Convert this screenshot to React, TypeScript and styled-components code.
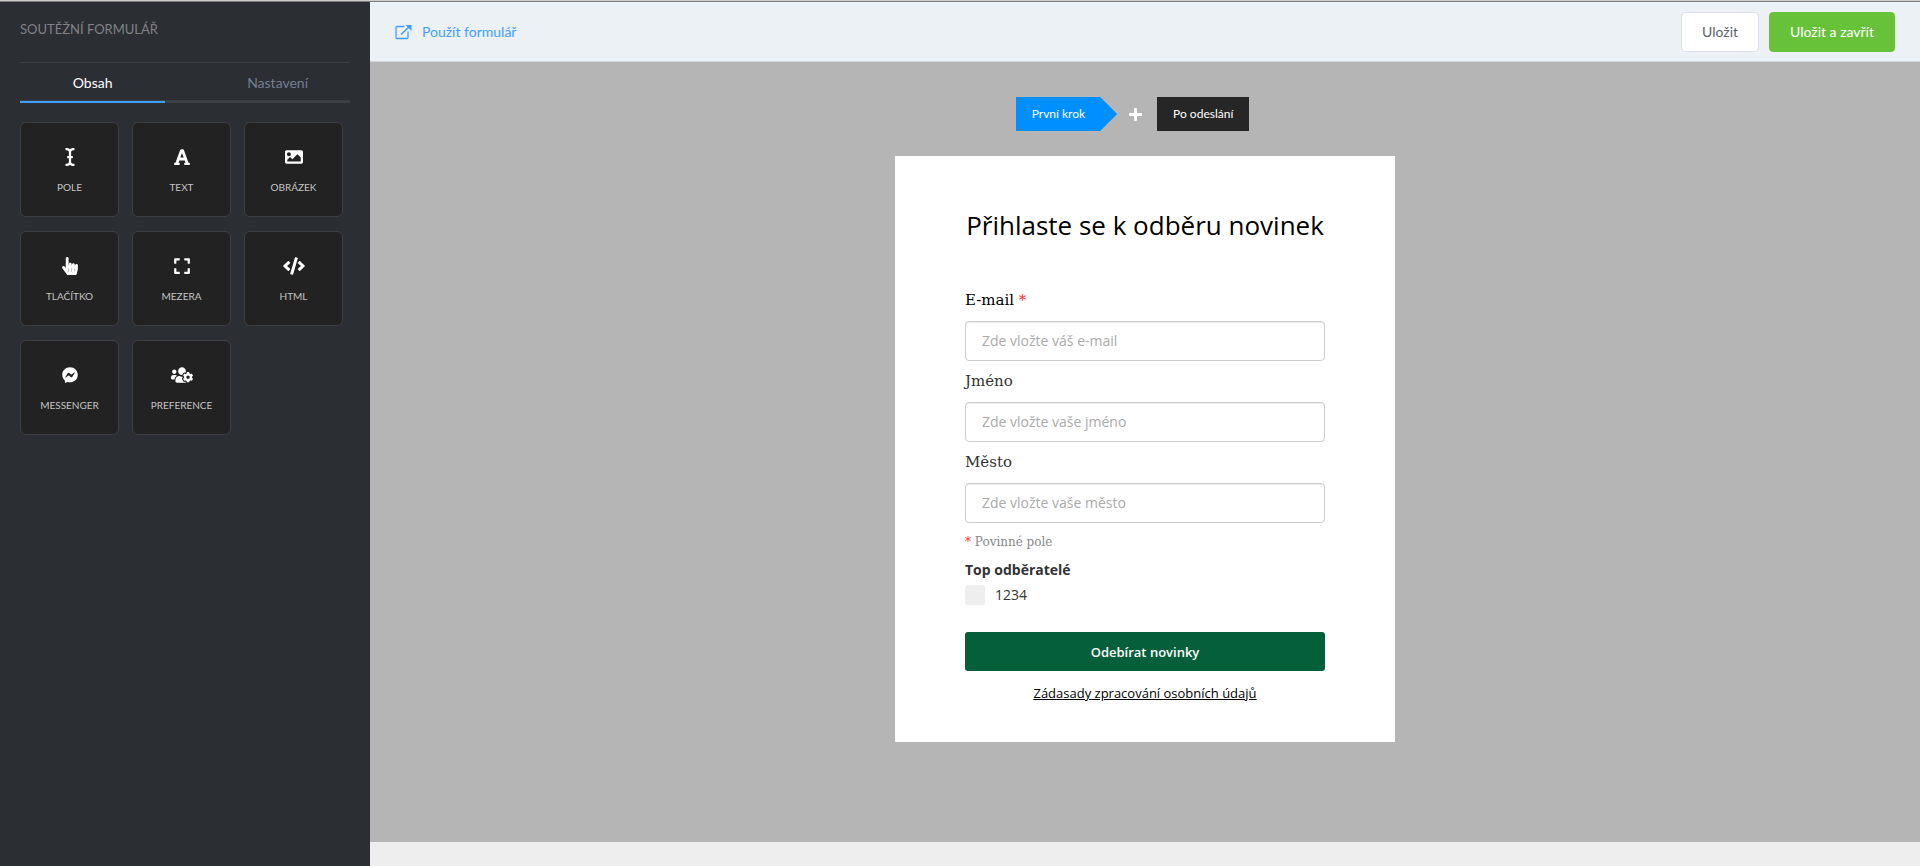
import React from "react";
import styled, { createGlobalStyle } from "styled-components";
import {
  FaICursor, FaFont, FaImage, FaHandPointer, FaExpand, FaCode, FaFacebookMessenger, FaUsersCog, FaPlus,
} from "react-icons/fa";

const ui = `Lato, "Open Sans", sans-serif`;
const body = `"Open Sans", "Noto Sans", sans-serif`;
const slab = `"DejaVu Serif", serif`;

const GlobalStyle = createGlobalStyle`
  *, *::before, *::after { box-sizing: border-box; }
  body { margin: 0; font-family: ${ui}; font-size: 14px; line-height: 20px; background: #eeeeee; }
  h1, h2, p, fieldset { margin: 0; padding: 0; border: 0; }
  button, input { font: inherit; }
  button { cursor: pointer; }
`;

const Page = styled.div`
  display: flex;
  min-height: 100vh;
  border-top: 1px solid #cccccc;
`;

const Sidebar = styled.aside`
  width: 370px;
  flex: none;
  padding: 12px 20px 20px;
  background: #2b2e33;
  border-top: 1px solid #808080;
`;

const SidebarTitle = styled.h1`
  height: 49px;
  padding-top: 5px;
  border-bottom: 1px solid #3c3f44;
  font-size: 13px;
  font-weight: 400;
  line-height: 20px;
  color: #808285;
  text-transform: uppercase;
`;

const Tabs = styled.div`
  display: flex;
  height: 40px;
  box-shadow: inset 0 -3px #3c3f44;
`;

const Tab = styled.button<{ $active?: boolean }>`
  flex: ${(p) => (p.$active ? "0 0 44%" : "1")};
  padding: ${(p) => (p.$active ? "2px 0 0" : "2px 0 0 40px")};
  border: 0;
  border-bottom: 2px solid ${(p) => (p.$active ? "#409eff" : "transparent")};
  background: none;
  color: ${(p) => (p.$active ? "#ffffff" : "#747f92")};
`;

const Tiles = styled.div`
  display: flex;
  flex-wrap: wrap;
  gap: 14px 13px;
  margin-top: 19px;
`;

const Tile = styled.button`
  display: flex;
  flex-direction: column;
  align-items: center;
  gap: 15px;
  width: 99px;
  height: 95px;
  padding: 25px 0 0;
  border: 1px solid #3c3f44;
  border-radius: 6px;
  background: #222222;
  color: #ffffff;
`;

const TileIcon = styled.span<{ $size: number }>`
  display: flex;
  align-items: center;
  height: 18px;
  svg {
    width: 22px;
    height: ${(p) => p.$size}px;
  }
`;

const TileLabel = styled.span`
  font-size: 10px;
  line-height: 12px;
  color: #c4c4c4;
  text-transform: uppercase;
`;

const Main = styled.main`
  flex: 1;
  display: flex;
  flex-direction: column;
  padding-bottom: 24px;
  border-top: 1px solid #808080;
`;

const Toolbar = styled.header`
  display: flex;
  align-items: center;
  gap: 10px;
  height: 60px;
  padding: 0 25px;
  background: #ecf1f6;
  border-bottom: 1px solid #d3d5d7;
`;

const UseLink = styled.a`
  display: flex;
  align-items: center;
  gap: 10px;
  margin-right: auto;
  color: #409eff;
  text-decoration: none;
`;

const ToolbarButton = styled.button<{ $primary?: boolean }>`
  height: 40px;
  padding: 0 20px;
  border: 1px solid ${(p) => (p.$primary ? "#67c23a" : "#dcdfe6")};
  border-radius: 4px;
  background: ${(p) => (p.$primary ? "#67c23a" : "#ffffff")};
  color: ${(p) => (p.$primary ? "#ffffff" : "#606266")};
`;

const Canvas = styled.section`
  flex: 1;
  display: flex;
  flex-direction: column;
  align-items: center;
  padding: 35px 20px 99px;
  background: #b5b5b5;
`;

const Steps = styled.nav`
  display: flex;
  align-items: center;
  padding-right: 25px;
  margin-bottom: 25px;
`;

const Step = styled.button<{ $active?: boolean }>`
  height: 34px;
  padding: ${(p) => (p.$active ? "0 32px 0 16px" : "0 16px")};
  border: 0;
  background: ${(p) => (p.$active ? "#008fff" : "#262626")};
  clip-path: ${(p) => (p.$active ? "polygon(0 0, calc(100% - 17px) 0, 100% 50%, calc(100% - 17px) 100%, 0 100%)" : "none")};
  color: #ffffff;
  font-size: 12px;
`;

const AddStep = styled.button`
  display: flex;
  padding: 0 14px 0 11px;
  border: 0;
  background: none;
  color: #ffffff;
  font-size: 15px;
`;

const Card = styled.form`
  width: 100%;
  max-width: 500px;
  padding: 49px 70px 39px;
  background: #ffffff;
  color: #333333;
  font-family: ${body};
`;

const FormTitle = styled.h2`
  margin-bottom: 45px;
  font-size: 26px;
  font-weight: 400;
  line-height: 40px;
  color: #000000;
  text-align: center;
`;

const Field = styled.div`
  display: flex;
  flex-direction: column;
  gap: 11px;
  margin-bottom: 10px;
`;

const Label = styled.label<{ $strong?: boolean }>`
  font-family: ${slab};
  font-size: 15px;
  line-height: 20px;
  color: ${(p) => (p.$strong ? "#000000" : "#333333")};
`;

const Required = styled.span`
  color: #ff2a2a;
`;

const TextInput = styled.input`
  width: 100%;
  height: 40px;
  padding: 0 16px 1px;
  border: 1px solid #cccccc;
  border-radius: 4px;
  background: #ffffff;
  box-shadow: inset 0 1px 1px rgba(0, 0, 0, 0.075);
  font-size: 14px;
  color: #333333;
  &::placeholder { color: #aaaaaa; opacity: 1; }
`;

const Note = styled.p`
  font-family: ${slab};
  font-size: 12px;
  line-height: 18px;
  color: #888888;
`;

const Legend = styled.legend`
  padding: 0;
  font-weight: 700;
  line-height: 20px;
`;

const Group = styled.fieldset`
  margin: 9px 0 27px;
`;

const Choice = styled.label`
  display: flex;
  align-items: center;
  gap: 10px;
  margin-top: 5px;
`;

const Checkbox = styled.input`
  appearance: none;
  width: 20px;
  height: 20px;
  margin: 0;
  border-radius: 3px;
  background: #eeeeee;
`;

const Submit = styled.button`
  display: block;
  width: 100%;
  height: 39px;
  border: 0;
  border-radius: 3px;
  background: #055f3a;
  color: #ffffff;
  font-size: 13px;
  font-weight: 600;
`;

const Terms = styled.p`
  margin-top: 12px;
  font-size: 13px;
  line-height: 20px;
  text-align: center;
  a { color: #000000; }
`;

const tiles = [
  { label: "Pole", Icon: FaICursor, size: 18 },
  { label: "Text", Icon: FaFont, size: 18 },
  { label: "Obrázek", Icon: FaImage, size: 18 },
  { label: "Tlačítko", Icon: FaHandPointer, size: 18 },
  { label: "Mezera", Icon: FaExpand, size: 18 },
  { label: "HTML", Icon: FaCode, size: 18 },
  { label: "Messenger", Icon: FaFacebookMessenger, size: 16 },
  { label: "Preference", Icon: FaUsersCog, size: 18 },
];

const fields = [
  { id: "email", label: "E-mail", placeholder: "Zde vložte váš e-mail", required: true },
  { id: "name", label: "Jméno", placeholder: "Zde vložte vaše jméno" },
  { id: "city", label: "Město", placeholder: "Zde vložte vaše město" },
];

function OpenIcon() {
  return (
    <svg width="17" height="16" viewBox="0 0 17 16" fill="none" stroke="currentColor" aria-hidden="true">
      <path d="M9.500 2.500H2a1 1 0 0 0-1 1v10a1 1 0 0 0 1 1h10a1 1 0 0 0 1-1V7.500" strokeWidth="1.300" />
      <path d="M6 10.500 14.500 2.500" strokeWidth="1.700" />
      <path d="M10.500 1H16.500V7L14.800 5.200 12.300 2.700Z" fill="currentColor" stroke="none" />
    </svg>
  );
}

export default function App() {
  return (
    <>
      <GlobalStyle />
      <Page>
        <Sidebar>
          <SidebarTitle>Soutěžní formulář</SidebarTitle>
          <Tabs role="tablist">
            <Tab type="button" role="tab" aria-selected="true" $active>Obsah</Tab>
            <Tab type="button" role="tab" aria-selected="false">Nastavení</Tab>
          </Tabs>
          <Tiles>
            {tiles.map(({ label, Icon, size }) => (
              <Tile type="button" key={label}>
                <TileIcon $size={size}><Icon aria-hidden="true" /></TileIcon>
                <TileLabel>{label}</TileLabel>
              </Tile>
            ))}
          </Tiles>
        </Sidebar>
        <Main>
          <Toolbar>
            <UseLink href="#use"><OpenIcon />Použít formulář</UseLink>
            <ToolbarButton type="button">Uložit</ToolbarButton>
            <ToolbarButton type="button" $primary>Uložit a zavřít</ToolbarButton>
          </Toolbar>
          <Canvas>
            <Steps>
              <Step type="button" $active>První krok</Step>
              <AddStep type="button" aria-label="Přidat krok"><FaPlus /></AddStep>
              <Step type="button">Po odeslání</Step>
            </Steps>
            <Card onSubmit={(e) => e.preventDefault()}>
              <FormTitle>Přihlaste se k odběru novinek</FormTitle>
              {fields.map((f) => (
                <Field key={f.id}>
                  <Label htmlFor={f.id} $strong={f.required}>
                    {f.label}{f.required && <Required> *</Required>}
                  </Label>
                  <TextInput id={f.id} type="text" placeholder={f.placeholder} />
                </Field>
              ))}
              <Note><Required>*</Required> Povinné pole</Note>
              <Group>
                <Legend>Top odběratelé</Legend>
                <Choice><Checkbox type="checkbox" />1234</Choice>
              </Group>
              <Submit type="submit">Odebírat novinky</Submit>
              <Terms><a href="#terms">Zádasady zpracování osobních údajů</a></Terms>
            </Card>
          </Canvas>
        </Main>
      </Page>
    </>
  );
}
